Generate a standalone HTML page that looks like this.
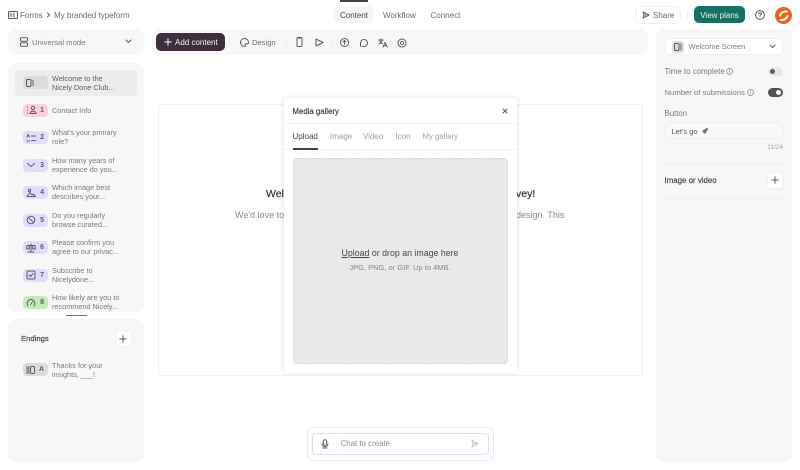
<!DOCTYPE html>
<html><head><meta charset="utf-8"><style>
*{box-sizing:border-box}
html,body{margin:0;padding:0;background:#fff;width:800px;height:470px;overflow:hidden;font-family:"Liberation Sans",sans-serif;color:#5e5c60}
.a{position:absolute;white-space:nowrap}
.f{font-size:8px;line-height:10px;color:#6b696d;margin-top:1px}
.p{position:absolute;background:#f7f7f7;border-radius:8px}
.t{position:absolute;white-space:nowrap;font-size:7.3px;line-height:9.2px;color:#7b797d;left:44px}
.b{position:absolute;left:15px;width:25px;height:13px;border-radius:4px;background:#e0dcff}
.b b{position:absolute;right:4px;top:0;line-height:13px;font-size:7px;color:#5e5c60}
.b svg{position:absolute;left:3px;top:1.5px}
svg{fill:none;stroke:#5e5c60;stroke-width:1;stroke-linecap:round;stroke-linejoin:round;position:absolute}
</style></head><body>

<svg style="left:8px;top:11px" width="10" height="8" viewBox="0 0 10 8"><rect x=".5" y=".5" width="9" height="7" rx="1"/><path d="M2 3h2M6 2v4M2 5h2"/></svg>
<div class="a f" style="left:20px;top:10px">Forms</div>
<svg style="left:46px;top:12px" width="5" height="6" viewBox="0 0 5 6"><path d="M1.500 1l2 2-2 2"/></svg>
<div class="a f" style="left:54px;top:10px">My branded typeform</div>

<div class="a" style="left:340px;top:0;width:28px;height:2px;background:#47404a"></div>
<div class="a" style="left:334px;top:6px;width:40px;height:17px;border-radius:5px;background:#f6f6f6"></div>
<div class="a f" style="left:340px;top:10px;color:#47444a">Content</div>
<div class="a f" style="left:383px;top:10px">Workflow</div>
<div class="a f" style="left:430.500px;top:10px">Connect</div>

<div class="a" style="left:635px;top:6px;width:46px;height:18px;border:1px solid #f0f0f0;border-radius:5px"></div>
<svg style="left:642px;top:11px" width="8" height="8" viewBox="0 0 8 8"><path d="M1 1l6 3-6 3 1-3zM2 4h2"/></svg>
<div class="a f" style="left:653px;top:10px">Share</div>
<div class="a" style="left:687px;top:10px;width:1px;height:9px;background:#f0f0f0"></div>
<div class="a" style="left:694px;top:6px;width:51px;height:17px;border-radius:5px;background:#187062;color:#e8f3f0;font-size:8px;line-height:19px;text-align:center">View plans</div>
<svg style="left:755px;top:10px" width="10" height="10" viewBox="0 0 10 10"><circle cx="5" cy="5" r="4.400"/><path d="M3.700 4c0-1.800 2.700-1.800 2.700-.1 0 1-1.400 1-1.400 2M5 7.300v.1"/></svg>
<div class="a" style="left:774.500px;top:6.500px;width:17.500px;height:17.500px;border-radius:50%;background:#ef5f16"></div>
<svg style="left:774.500px;top:6.500px;stroke:#fff;stroke-width:2" width="17.500" height="17.500" viewBox="0 0 17 17"><path d="M11.500 4.500C8.500 4 5.500 5.500 4.800 8.500M5.500 12.500C8.500 13 11.500 11.500 12.200 8.500"/></svg>

<div class="p" style="left:8px;top:29px;width:136px;height:26px"></div>
<svg style="left:20px;top:37px" width="8" height="10" viewBox="0 0 8 10"><rect x=".5" y=".8" width="7" height="3.400" rx=".8"/><rect x=".5" y="5.800" width="7" height="3.400" rx=".8"/></svg>
<div class="a f" style="left:32px;top:37px;font-size:7.7px;color:#7b797d">Universal mode</div>
<svg style="left:125px;top:39px" width="7" height="5" viewBox="0 0 7 5"><path d="M1 1l2.500 2.500L6 1"/></svg>

<div class="p" style="left:8px;top:63px;width:136px;height:249px;overflow:hidden">
 <div class="a" style="left:7px;top:6.500px;width:122px;height:26px;border-radius:5px;background:#ececec"></div>
 <div class="b" style="top:13px;background:#dcdcdc"><svg style="left:3px;top:2.500px" width="9" height="8" viewBox="0 0 9 8"><rect x=".5" y=".5" width="4.500" height="7" rx="1"/><path d="M7 1.500v5"/></svg></div>
 <div class="t" style="top:10.500px;color:#5e5c60">Welcome to the<br>Nicely Done Club...</div>

 <div class="b" style="top:40.500px;background:#fbd0da"><svg width="11" height="10" viewBox="0 0 11 10"><circle cx="7" cy="3" r="1.700"/><path d="M4 8.500c0-3 6-3 6 0zM1.500 2v.1M1.500 5v.1M1.500 8v.1"/></svg><b>1</b></div>
 <div class="t" style="top:42.500px">Contact Info</div>

 <div class="b" style="top:68px"><svg width="10" height="10" viewBox="0 0 10 10"><path d="M1 4l1.200-2.500L3.400 4M1 8h2.400M5.500 3h4M5.500 7.500h4"/></svg><b>2</b></div>
 <div class="t" style="top:65px">What's your primary<br>role?</div>

 <div class="b" style="top:95.500px"><svg width="10" height="10" viewBox="0 0 10 10"><path d="M1.500 3.500l3.500 3 3.500-3"/></svg><b>3</b></div>
 <div class="t" style="top:92.500px">How many years of<br>experience do you...</div>

 <div class="b" style="top:123px"><svg width="10" height="10" viewBox="0 0 10 10"><circle cx="3.500" cy="2.500" r="1.200"/><path d="M1 8.500l3-4 2 2.500 1-1 2.500 2.500z"/></svg><b>4</b></div>
 <div class="t" style="top:120px">Which image best<br>describes your...</div>

 <div class="b" style="top:150.500px"><svg width="10" height="10" viewBox="0 0 10 10"><circle cx="5" cy="5" r="3.800"/><path d="M2.300 2.300l5.400 5.400"/></svg><b>5</b></div>
 <div class="t" style="top:147.500px">Do you regularly<br>browse curated...</div>

 <div class="b" style="top:178px"><svg width="10" height="10" viewBox="0 0 10 10"><path d="M5 1v8M2 9h6M1 2.500h8M1 3l-.5 3h3L3 3M7 3l-.5 3h3L9 3"/></svg><b>6</b></div>
 <div class="t" style="top:175px">Please confirm you<br>agree to our privac...</div>

 <div class="b" style="top:205.500px"><svg width="10" height="10" viewBox="0 0 10 10"><rect x="1" y="1" width="8" height="8" rx="1"/><path d="M3 5l1.500 1.500L7 3.500"/></svg><b>7</b></div>
 <div class="t" style="top:202.500px">Subscribe to<br>Nicelydone...</div>

 <div class="b" style="top:233px;background:#c7e9b8"><svg width="10" height="10" viewBox="0 0 10 10"><path d="M2 8C0 5 2 1.500 5 1.500S10 5 8 8M4.500 6.500L6.500 4"/></svg><b>8</b></div>
 <div class="t" style="top:230px">How likely are you to<br>recommend Nicely...</div>
</div>
<div class="a" style="left:66px;top:315px;width:21px;height:1px;background:#77757a"></div>

<div class="p" style="left:8px;top:319px;width:136px;height:143px"></div>
<div class="a f" style="left:21px;top:333px;font-size:7.7px;color:#47444a;-webkit-text-stroke:.2px #47444a">Endings</div>
<div class="a" style="left:114.500px;top:330px;width:17px;height:17px;border-radius:4px;background:#fff;border:1px solid #f0f0f0"></div>
<svg style="left:119px;top:334.500px" width="8" height="8" viewBox="0 0 8 8"><path d="M4 .8v6.400M.8 4h6.400"/></svg>
<div class="b" style="left:23px;top:363px;background:#dcdcdc"><svg width="10" height="10" viewBox="0 0 10 10"><path d="M1 1.500v7M2.800 1.500v7"/><rect x="4.500" y="1.500" width="4" height="7" rx="1"/></svg><b>A</b></div>
<div class="t" style="left:52px;top:361px">Thanks for your<br>insights, ___!</div>

<div class="p" style="left:152px;top:29px;width:496px;height:26px"></div>
<div class="a" style="left:156px;top:33px;width:69px;height:18px;border-radius:5px;background:#3d2f3e;color:#f3f1f3;font-size:8px;line-height:20px;padding-left:19px">Add content</div>
<svg style="left:164px;top:38px;stroke:#fff" width="8" height="8" viewBox="0 0 8 8"><path d="M4 .8v6.400M.8 4h6.400"/></svg>
<div class="a" style="left:229px;top:37px;width:1px;height:10px;background:#f0f0f0"></div>
<svg style="left:240px;top:38px" width="9" height="9" viewBox="0 0 9 9"><path d="M4.500.5a4 4 0 1 0 0 8c1 0 1-1 .7-1.500-.4-.8.2-1.300 1-1.300h1.300c.7 0 1-.6 1-1.200C8.500 2 6.700.5 4.500.5z"/></svg>
<div class="a f" style="left:252px;top:37px;font-size:7.6px">Design</div>
<div class="a" style="left:286px;top:37px;width:1px;height:10px;background:#f0f0f0"></div>
<svg style="left:296px;top:37px" width="7" height="10" viewBox="0 0 7 10"><rect x="1" y=".5" width="5" height="9" rx="1"/><path d="M3 1.500h1"/></svg>
<svg style="left:315px;top:37.500px" width="9" height="9" viewBox="0 0 9 9"><path d="M1 1l7 3.500L1 8z"/></svg>
<div class="a" style="left:331px;top:37px;width:1px;height:10px;background:#f0f0f0"></div>
<svg style="left:340px;top:38px" width="9" height="9" viewBox="0 0 9 9"><circle cx="4.500" cy="4.500" r="4"/><path d="M4.500 2.500v4M3 3.800l1.500-1.300L6 3.800"/></svg>
<svg style="left:359px;top:38px" width="9" height="10" viewBox="0 0 9 10"><path d="M1.500 8.500V5a3.500 3.500 0 1 1 3.500 3.500H3" stroke-dasharray="3 .7"/></svg>
<svg style="left:378px;top:37.500px" width="10" height="10" viewBox="0 0 10 10"><path d="M.8 2h4.400M3 1v1M4.500 2C4 4 2.500 5 1 5.800M1.800 3c.5 1.500 1.500 2.300 2.600 2.600M5 9l2-4.500L9.300 9M5.800 7.600h2.800"/></svg>
<svg style="left:397px;top:37.500px" width="10" height="10" viewBox="0 0 10 10"><circle cx="5" cy="5" r="1.600"/><circle cx="5" cy="5" r="4" stroke-dasharray="2.400 .6"/></svg>

<div class="a" style="left:158px;top:104px;width:484.500px;height:272px;border:1px solid #f0f0f0"></div>
<div class="a" style="left:266px;top:187px;font-size:10.5px;line-height:14px;color:#2e2c30;-webkit-text-stroke:.15px #2e2c30">Wel</div>
<div class="a" style="left:516px;top:187px;font-size:10.5px;line-height:14px;color:#2e2c30;-webkit-text-stroke:.15px #2e2c30">vey!</div>
<div class="a" style="left:235px;top:209px;font-size:9px;line-height:12px;color:#8a888c">We'd love to</div>
<div class="a" style="left:516px;top:209px;font-size:9px;line-height:12px;color:#8a888c">design. This</div>

<div class="a" style="left:284px;top:98px;width:233px;height:275px;background:#fff;border-radius:3px;box-shadow:0 0 6px rgba(0,0,0,.13)"></div>
<div class="a f" style="left:292.500px;top:105.500px;font-size:7.8px;color:#47444a;-webkit-text-stroke:.2px #47444a">Media gallery</div>
<svg style="left:501.500px;top:107.500px" width="6" height="6" viewBox="0 0 6 6"><path d="M1 1l4 4M5 1l-4 4"/></svg>
<div class="a" style="left:284px;top:123px;width:233px;height:1px;background:#f2f2f2"></div>
<div class="a f" style="left:292.500px;top:131px;color:#47444a">Upload</div>
<div class="a f" style="left:330px;top:131px;color:#a3a1a5">Image</div>
<div class="a f" style="left:363px;top:131px;color:#a3a1a5">Video</div>
<div class="a f" style="left:395.500px;top:131px;color:#a3a1a5">Icon</div>
<div class="a f" style="left:422.500px;top:131px;font-size:7.8px;color:#a3a1a5">My gallery</div>
<div class="a" style="left:284px;top:149px;width:233px;height:1px;background:#f2f2f2"></div>
<div class="a" style="left:292.500px;top:148px;width:25px;height:1.500px;background:#47404a"></div>

<div class="a" style="left:292.500px;top:158px;width:215px;height:205.500px;background:#e9e9eb;border:1px dashed #d8d8da;border-radius:4px"></div>
<div class="a" style="left:292.500px;top:247px;width:215px;text-align:center;font-size:8.800px;line-height:12px;color:#47444a"><u>Upload</u> or drop an image here</div>
<div class="a" style="left:292.500px;top:263px;width:215px;text-align:center;font-size:7.500px;line-height:10px;color:#86848a">JPG, PNG, or GIF. Up to 4MB.</div>

<div class="a" style="left:307px;top:427px;width:186.500px;height:33.500px;border:1px solid #f1e6f5;border-radius:6px;background:#fff"></div>
<div class="a" style="left:312px;top:432.500px;width:176.500px;height:22.500px;border:1.500px solid #e8d8ef;border-radius:4px;background:#fff"></div>
<svg style="left:321px;top:438.500px" width="8" height="10" viewBox="0 0 8 10"><rect x="2.300" y=".7" width="3.400" height="5.600" rx="1.700"/><path d="M1 5c0 3.500 6 3.500 6 0M2 9h4"/></svg>
<div class="a" style="left:336px;top:438px;width:1px;height:12px;background:#f2f2f2"></div>
<div class="a f" style="left:340.500px;top:438px;font-size:7.9px;color:#8e8c92">Chat to create</div>
<svg style="left:471px;top:439px;stroke:#c0bec2" width="8" height="9" viewBox="0 0 8 9"><path d="M1 1l6 3.500L1 8l1-3.500zM2 4.500h3"/></svg>

<div class="p" style="left:656px;top:29px;width:136px;height:433px"></div>
<div class="a" style="left:664.500px;top:38px;width:118.500px;height:17px;border-radius:4px;background:#fff;border:1px solid #f0f0f0"></div>
<div class="a" style="left:672px;top:41px;width:12px;height:12px;border-radius:3px;background:#dedede"></div>
<svg style="left:674px;top:43px" width="9" height="8" viewBox="0 0 9 8"><rect x=".5" y=".5" width="4.500" height="7" rx="1"/><path d="M7 1v6"/></svg>
<div class="a f" style="left:688.500px;top:40.500px;font-size:7.500px;color:#7b797d">Welcome Screen</div>
<svg style="left:769px;top:44px" width="7" height="5" viewBox="0 0 7 5"><path d="M1 1l2.500 2.500L6 1"/></svg>

<div class="a f" style="left:664.500px;top:66px;font-size:7.900px;color:#7b797d">Time to complete</div>
<svg style="left:725.500px;top:67.500px;stroke:#86848a;stroke-width:.7" width="7" height="7" viewBox="0 0 7 7"><circle cx="3.500" cy="3.500" r="3"/><path d="M3.500 3v2M3.500 2v.1"/></svg>
<div class="a" style="left:768px;top:66.500px;width:15px;height:9px;border-radius:5px;background:#e8e8e8"></div>
<div class="a" style="left:770px;top:68.500px;width:5px;height:5px;border-radius:50%;background:#5e5c60"></div>

<div class="a f" style="left:664.500px;top:87px;font-size:7.700px;color:#7b797d">Number of submissions</div>
<svg style="left:747px;top:88.500px;stroke:#86848a;stroke-width:.7" width="7" height="7" viewBox="0 0 7 7"><circle cx="3.500" cy="3.500" r="3"/><path d="M3.500 3v2M3.500 2v.1"/></svg>
<div class="a" style="left:768px;top:87.500px;width:15px;height:9px;border-radius:5px;background:#55525a"></div>
<div class="a" style="left:776px;top:89.500px;width:5px;height:5px;border-radius:50%;background:#fff"></div>

<div class="a f" style="left:664.500px;top:108px;font-size:7.800px;color:#7b797d">Button</div>
<div class="a" style="left:664.500px;top:122px;width:118.500px;height:17px;border-radius:5px;background:#f9f9f9;border:1px solid #eeeeee"></div>
<div class="a f" style="left:671.500px;top:126px;font-size:7.500px;color:#5e5c60">Let's go</div>
<svg style="left:700.500px;top:126.500px;stroke:none" width="8" height="8" viewBox="0 0 8 8"><path d="M1 4L6 .7 7.300 2 4 7z" fill="#8b6a6a"/><path d="M1 7l1.500-2L3 5.500z" fill="#e8651f"/></svg>
<div class="a" style="left:738px;top:143px;width:45px;text-align:right;font-size:6.500px;line-height:9px;color:#a3a1a5">11/24</div>
<div class="a" style="left:664.500px;top:162.500px;width:118.500px;height:1px;background:#eeeeee"></div>
<div class="a f" style="left:664.500px;top:175px;font-size:7.900px;color:#47444a;-webkit-text-stroke:.15px #47444a">Image or video</div>
<div class="a" style="left:766.500px;top:171.500px;width:17px;height:17px;border-radius:4px;background:#fff;border:1px solid #f0f0f0"></div>
<svg style="left:771px;top:176px" width="8" height="8" viewBox="0 0 8 8"><path d="M4 .8v6.400M.8 4h6.400"/></svg>
<div class="a" style="left:664.500px;top:197.500px;width:118.500px;height:1px;background:#eeeeee"></div>
</body></html>
